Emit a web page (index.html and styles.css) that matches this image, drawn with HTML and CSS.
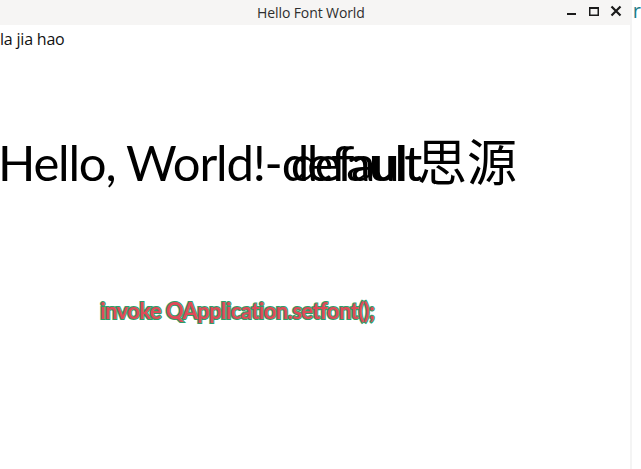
FILE: index.html
```html
<!DOCTYPE html>
<html>
<head>
<meta charset="utf-8">
<link rel="stylesheet" href="styles.css">
</head>
<body>
<div class="screen">
  <div class="window">
    <div class="titlebar">
      <div class="title">Hello Font World</div>
      <div class="controls">
        <svg class="ctl" width="12" height="12" viewBox="0 0 12 12"><rect x="1" y="8" width="9" height="2" fill="#1a1a1a"/></svg>
        <svg class="ctl" width="12" height="12" viewBox="0 0 12 12"><rect x="1.75" y="2.75" width="8.5" height="7.5" fill="none" stroke="#1a1a1a" stroke-width="1.5"/><rect x="1" y="2" width="10" height="2" fill="#1a1a1a"/></svg>
        <svg class="ctl" width="12" height="12" viewBox="0 0 12 12"><path d="M1.5 1.5 L10.5 10.5 M10.5 1.5 L1.5 10.5" stroke="#1a1a1a" stroke-width="2.2"/></svg>
      </div>
    </div>
    <div class="content">
      <div class="small">la jia hao</div>
      <div class="big">
        <span class="prefix">Hello, World!-</span>
        <span class="stack">
          <span class="def-a">default</span>
          <span class="def-b">default</span>
        </span>
        <span class="cjk">思源</span>
      </div>
      <div class="invoke">invoke QApplication.setfont();</div>
    </div>
  </div>
  <div class="side">
    <div class="side-edge"></div>
    <div class="side-main"><span class="side-r">r</span></div>
  </div>
</div>
</body>
</html>
```
FILE: styles.css
```css
html, body {
  margin: 0;
  padding: 0;
  background: #ffffff;
  overflow: hidden;
}
.screen {
  display: flex;
  width: 641px;
  height: 469px;
}
.window {
  width: 633px;
  display: flex;
  flex-direction: column;
  background: #ffffff;
}
.titlebar {
  height: 25px;
  background: #f6f5f4;
  position: relative;
  display: flex;
  align-items: center;
  justify-content: center;
}
.title {
  font-family: "Open Sans", "Noto Sans", sans-serif;
  font-size: 14px;
  color: #2e2e2e;
  letter-spacing: -0.1px;
  margin-left: -8px;
}
.controls {
  position: absolute;
  right: 8px;
  top: 5px;
  display: flex;
  gap: 10px;
}
.ctl {
  display: block;
}
.content {
  flex: 1;
  overflow: hidden;
  display: flex;
  flex-direction: column;
}
.small {
  font-family: "Open Sans", "Noto Sans", sans-serif;
  font-size: 16px;
  color: #111;
  line-height: 22px;
  margin-top: 3px;
  letter-spacing: -0.2px;
}
.big {
  display: flex;
  align-items: baseline;
  margin-top: 79px;
  margin-left: -2px;
  font-family: "Lato", "Open Sans", sans-serif;
  font-size: 49px;
  line-height: 60px;
  color: #000;
  white-space: nowrap;
}
.prefix {
  letter-spacing: -1.2px;
}
.stack {
  display: grid;
}
.def-a, .def-b {
  grid-area: 1 / 1;
}
.def-a {
  letter-spacing: -1.8px;
}
.def-b {
  margin-left: 9px;
  letter-spacing: -3.2px;
}
.cjk {
  font-family: "Noto Sans CJK SC", sans-serif;
  font-size: 50px;
  margin-left: -3px;
}
.invoke {
  margin-top: 105px;
  margin-left: 100px;
  font-family: "Lato", "Open Sans", sans-serif;
  font-weight: 700;
  font-size: 22px;
  color: #e04a58;
  -webkit-text-stroke: 2.2px #2e9e6a;
  paint-order: stroke fill;
  letter-spacing: -0.6px;
}
.side {
  flex: 1;
  display: flex;
}
.side-edge {
  width: 2px;
  background: #f4f4f4;
}
.side-main {
  flex: 1;
  background: #ffffff;
  overflow: hidden;
}
.side-r {
  font-family: "Open Sans", sans-serif;
  font-size: 20px;
  color: #1e7c8a;
  line-height: 22px;
  margin-left: 1px;
}
```
